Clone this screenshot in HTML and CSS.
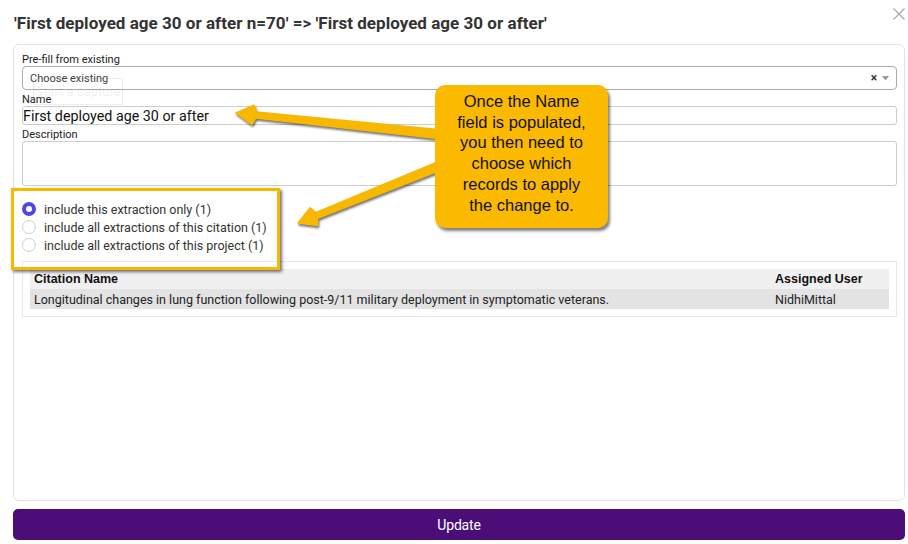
FILE: index.html
```html
<!DOCTYPE html>
<html>
<head>
<meta charset="utf-8">
<link rel="stylesheet" href="styles.css">
</head>
<body>
<div class="modal">
  <header class="head">
    <h1 class="title">'First deployed age 30 or after n=70' =&gt; 'First deployed age 30 or after'</h1>
    <button class="close" aria-label="Close">
      <svg width="12" height="12" viewBox="0 0 12 12"><path d="M0.5 0.5 L11.5 11.5 M11.5 0.5 L0.5 11.5" stroke="#a8a8a8" stroke-width="1.2" fill="none"/></svg>
    </button>
  </header>
  <section class="panel">
    <label class="lbl first">Pre-fill from existing</label>
    <div class="select">
      <span class="placeholder">Choose existing</span>
      <span class="sel-icons">
        <span class="clear">×</span>
        <svg width="7" height="5" viewBox="0 0 7 5"><path d="M0 0 L7 0 L3.5 4.5 Z" fill="#999"/></svg>
      </span>
    </div>
    <label class="lbl">Name</label>
    <div class="input">First deployed age 30 or after</div>
    <label class="lbl">Description</label>
    <div class="textarea"></div>
    <div class="radios">
      <label class="radio"><span class="dot on"></span>include this extraction only (1)</label>
      <label class="radio"><span class="dot"></span>include all extractions of this citation (1)</label>
      <label class="radio"><span class="dot"></span>include all extractions of this project (1)</label>
    </div>
    <div class="table-wrap">
      <table class="tbl">
        <thead>
          <tr><th class="c1">Citation Name</th><th class="c2">Assigned User</th></tr>
        </thead>
        <tbody>
          <tr><td class="c1">Longitudinal changes in lung function following post-9/11 military deployment in symptomatic veterans.</td><td class="c2">NidhiMittal</td></tr>
        </tbody>
      </table>
    </div>
  </section>
  <button class="update">Update</button>
</div>

<div class="ghost">Start a capture</div>
<div class="highlight"></div>
<svg class="arrows" width="908" height="544" viewBox="0 0 908 544">
  <polygon class="arrow" points="236,113 251.9,124.3 255.6,118.1 444.5,139.3 445.5,130.3 256.2,112.1 253.9,105.3"/>
  <polygon class="arrow" points="298,223 317.4,225.4 317.7,218.3 446.2,168.1 442.8,159.7 315.5,212.7 310.2,207.8"/>
</svg>
<div class="callout">Once the Name<br>field is populated,<br>you then need to<br>choose which<br>records to apply<br>the change to.</div>
</body>
</html>
```
FILE: styles.css
```css
* { box-sizing: border-box; }
html, body { margin: 0; padding: 0; }
body {
  width: 908px;
  height: 544px;
  background: #fff;
  font-family: Roboto, "Liberation Sans", Arial, sans-serif;
  color: #222;
  position: relative;
  overflow: hidden;
}
.modal {
  height: 544px;
  display: flex;
  flex-direction: column;
  padding: 0 3px 4px 13px;
}
.head {
  height: 44px;
  flex: none;
  display: flex;
  justify-content: space-between;
  align-items: flex-start;
}
.title {
  margin: 13px 0 0 1px;
  font-size: 17px;
  line-height: 20px;
  font-weight: 700;
  color: #333;
  letter-spacing: 0.03px;
}
.close {
  margin-top: 8px;
  width: 12px;
  height: 12px;
  padding: 0;
  border: 0;
  background: none;
  display: block;
}
.close svg { display: block; }
.panel {
  flex: 1;
  border: 1px solid #e3e3e3;
  border-radius: 6px;
  padding: 8px 7px 0 8px;
  display: flex;
  flex-direction: column;
}
.lbl {
  display: block;
  font-size: 11px;
  line-height: 13px;
  color: #222;
  margin-top: 3px;
}
.lbl.first { margin-top: 0; }
.select {
  height: 24px;
  border: 1px solid #aaa;
  border-radius: 4px;
  display: flex;
  align-items: center;
  justify-content: space-between;
  padding: 0 7px 0 7px;
}
.placeholder { font-size: 11px; color: #444; }
.sel-icons { display: flex; align-items: center; gap: 5px; }
.clear { font-size: 12px; font-weight: 700; color: #333; line-height: 12px; }
.sel-icons svg { display: block; }
.input {
  height: 19px;
  border: 1px solid #ccc;
  border-radius: 3px;
  font-size: 14.3px;
  line-height: 18px;
  color: #111;
  padding-left: 0;
}
.textarea {
  height: 45px;
  border: 1px solid #ccc;
  border-radius: 3px;
}
.radios {
  margin-top: 14px;
  display: flex;
  flex-direction: column;
}
.radio {
  height: 18px;
  display: flex;
  align-items: center;
  gap: 8px;
  font-size: 12.5px;
  color: #333;
}
.dot {
  width: 14px;
  height: 14px;
  border-radius: 50%;
  border: 1px solid #d0d0d0;
  background: #fff;
  flex: none;
}
.dot.on {
  border: 4px solid #4f46e5;
  background: #fff;
}
.table-wrap {
  margin-top: 7px;
  border: 1px solid #e8e8e8;
  padding: 7px;
}
.tbl {
  width: 100%;
  border-collapse: collapse;
  font-size: 12.5px;
}
.tbl th, .tbl td {
  height: 20px;
  padding: 0 4px;
  text-align: left;
  color: #222;
}
.tbl th {
  background: #f0f0f0;
  font-family: "Liberation Sans", Arial, sans-serif;
  font-weight: 700;
  color: #111;
}
.tbl td { background: #e3e3e3; }
.tbl .c2 { width: 118px; }
.update {
  margin-top: 8px;
  height: 31px;
  flex: none;
  border: 0;
  border-radius: 5px;
  background: #4b0e79;
  color: #fff;
  font-family: Roboto, "Liberation Sans", sans-serif;
  font-size: 14px;
  letter-spacing: -0.2px;
}
.ghost {
  position: absolute;
  left: 33px;
  top: 78px;
  width: 90px;
  height: 27px;
  border: 1px solid rgba(0,0,0,0.07);
  color: rgba(0,0,0,0.08);
  font-size: 13px;
  line-height: 25px;
  text-align: center;
  white-space: nowrap;
  overflow: hidden;
}
.highlight {
  position: absolute;
  left: 11px;
  top: 188px;
  width: 269px;
  height: 82px;
  border: 3px solid #f9b800;
  box-shadow: 2px 2px 3px rgba(0,0,0,0.55);
}
.arrows {
  position: absolute;
  left: 0;
  top: 0;
  pointer-events: none;
}
.arrow {
  fill: #f9b800;
  stroke: #f9b800;
  stroke-width: 1.5;
  stroke-linejoin: round;
  filter: drop-shadow(1.5px 2px 1.2px rgba(0,0,0,0.55));
}
.callout {
  position: absolute;
  left: 435px;
  top: 85px;
  width: 173px;
  height: 143px;
  background: #fbb900;
  border-radius: 10px;
  box-shadow: 2px 3px 3px rgba(0,0,0,0.5);
  padding-top: 6px;
  text-align: center;
  font-family: "Liberation Sans", Arial, sans-serif;
  font-size: 16.5px;
  line-height: 20.7px;
  color: #111;
}
```
